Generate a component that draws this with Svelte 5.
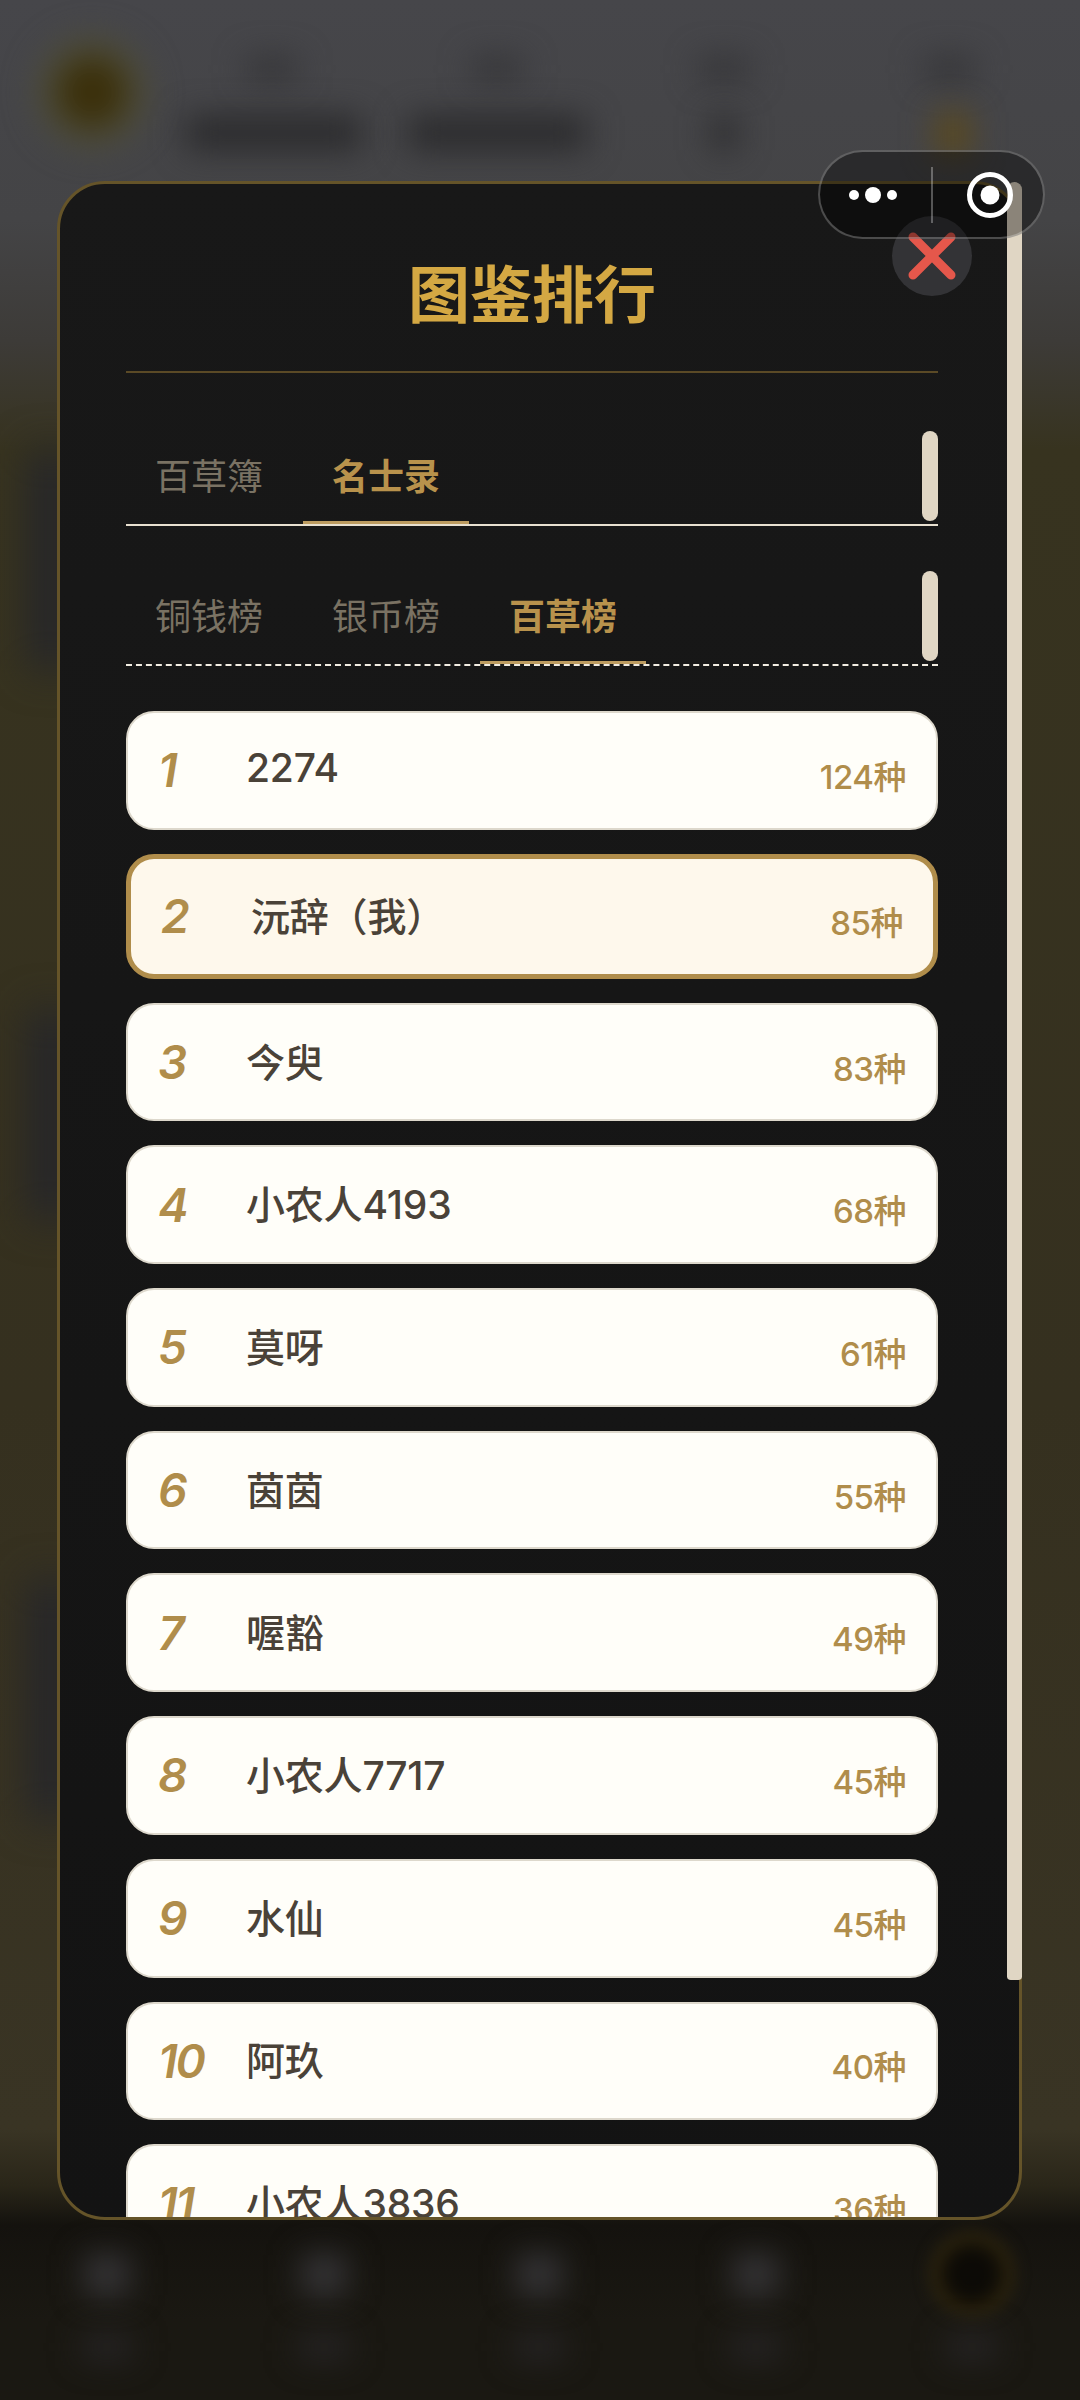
<script lang="ts">
  const mainTabs = [
    { label: "百草簿", active: false },
    { label: "名士录", active: true },
  ];
  const subTabs = [
    { label: "铜钱榜", active: false },
    { label: "银币榜", active: false },
    { label: "百草榜", active: true },
  ];
  const ranks = [
    { rank: 1, name: "2274", count: 124 },
    { rank: 2, name: "沅辞（我）", count: 85, me: true },
    { rank: 3, name: "今臾", count: 83 },
    { rank: 4, name: "小农人4193", count: 68 },
    { rank: 5, name: "莫呀", count: 61 },
    { rank: 6, name: "茵茵", count: 55 },
    { rank: 7, name: "喔豁", count: 49 },
    { rank: 8, name: "小农人7717", count: 45 },
    { rank: 9, name: "水仙", count: 45 },
    { rank: 10, name: "阿玖", count: 40 },
    { rank: 11, name: "小农人3836", count: 36 },
  ];
</script>

<div class="page">
  <!-- blurred page behind the modal -->
  <div class="backdrop">
    <div class="blob avatar"></div>
    <div class="blob label l1"></div>
    <div class="blob label l2"></div>
    <div class="blob label l3"></div>
    <div class="blob label l4"></div>
    <div class="blob value v1"></div>
    <div class="blob value v2"></div>
    <div class="blob value v3"></div>
    <div class="blob gold"></div>
    <div class="blob side s1"></div>
    <div class="blob side s2"></div>
    <div class="blob side s3"></div>
    <div class="blob nav n1"></div>
    <div class="blob nav n2"></div>
    <div class="blob nav n3"></div>
    <div class="blob nav n4"></div>
    <div class="blob nav-gold"></div>
    <div class="blob navlabel m1"></div>
    <div class="blob navlabel m2"></div>
    <div class="blob navlabel m3"></div>
    <div class="blob navlabel m4"></div>
    <div class="blob navlabel m5"></div>
  </div>

  <div class="panel">
    <h1 class="title">图鉴排行</h1>

    <div class="tabs solid">
      {#each mainTabs as tab}
        <div class="tab" class:active={tab.active}>{tab.label}</div>
      {/each}
      <span class="thumb"></span>
    </div>

    <div class="tabs dashed">
      {#each subTabs as tab}
        <div class="tab" class:active={tab.active}>{tab.label}</div>
      {/each}
      <span class="thumb"></span>
    </div>

    <div class="list">
      {#each ranks as item}
        <div class="row" class:me={item.me}>
          <span class="rank">{item.rank}</span>
          <span class="name">{item.name}</span>
          <span class="count">{item.count}种</span>
        </div>
      {/each}
    </div>
  </div>

  <div class="scrollbar"></div>

  <div class="close">
    <svg viewBox="0 0 80 80" width="80" height="80">
      <path d="M21 21 L59 59 M59 21 L21 59" stroke="#e5574b" stroke-width="9" stroke-linecap="round" fill="none" />
    </svg>
  </div>

  <div class="capsule">
    <svg class="dots" viewBox="0 0 60 20" width="60" height="20">
      <circle cx="11" cy="10" r="5" fill="#fff" />
      <circle cx="30" cy="10" r="8" fill="#fff" />
      <circle cx="49" cy="10" r="5" fill="#fff" />
    </svg>
    <span class="sep"></span>
    <svg class="target" viewBox="0 0 48 48" width="48" height="48">
      <circle cx="24" cy="24" r="20.5" stroke="#fff" stroke-width="5" fill="none" />
      <circle cx="24" cy="24" r="9.5" fill="#fff" />
    </svg>
  </div>
</div>

<style>
  :global(body) {
    margin: 0;
    background: #1a1812;
  }

  .page {
    position: relative;
    width: 1080px;
    height: 2400px;
    overflow: hidden;
    padding-top: 181px;
    box-sizing: border-box;
    font-family: Inter, "Noto Sans CJK SC", sans-serif;
  }

  .backdrop {
    position: absolute;
    inset: 0;
    overflow: hidden;
    background: linear-gradient(
      180deg,
      #46464a 0,
      #444446 220px,
      #3d3b38 340px,
      #37331f 450px,
      #35301f 1400px,
      #393424 2130px,
      #2a2619 2185px,
      #14120e 2225px,
      #1a1812 2320px,
      #1a1812 2400px
    );
  }

  .blob {
    position: absolute;
    filter: blur(16px);
  }

  .avatar {
    left: 36px;
    top: 36px;
    width: 112px;
    height: 112px;
    border-radius: 50%;
    background: radial-gradient(circle, #3a2e08 0 30%, #50503f 62%, #4a4a48 100%);
  }

  .label {
    top: 58px;
    width: 50px;
    height: 22px;
    background: #333336;
  }
  .l1 { left: 247px; }
  .l2 { left: 472px; }
  .l3 { left: 699px; }
  .l4 { left: 924px; }

  .value {
    top: 116px;
    height: 34px;
    background: #2a2a2c;
  }
  .v1 { left: 186px; width: 176px; }
  .v2 { left: 408px; width: 178px; }
  .v3 { left: 712px; width: 24px; }

  .gold {
    left: 936px;
    top: 112px;
    width: 34px;
    height: 44px;
    background: #5c4a1c;
  }

  .side {
    left: 30px;
    width: 40px;
    background: #23242b;
    filter: blur(20px);
  }
  .s1 { top: 450px; height: 220px; }
  .s2 { top: 1010px; height: 210px; }
  .s3 { top: 1580px; height: 240px; }

  .nav {
    top: 2255px;
    width: 44px;
    height: 40px;
    background: #38373a;
  }
  .n1 { left: 85px; }
  .n2 { left: 302px; }
  .n3 { left: 517px; }
  .n4 { left: 734px; }

  .nav-gold {
    left: 930px;
    top: 2232px;
    width: 84px;
    height: 84px;
    border-radius: 50%;
    background: radial-gradient(circle, #0c0a06 0 40%, #3b2f10 72%);
    filter: blur(8px);
  }

  .navlabel {
    top: 2336px;
    width: 50px;
    height: 22px;
    background: #29272a;
  }
  .m1 { left: 82px; }
  .m2 { left: 299px; }
  .m3 { left: 514px; }
  .m4 { left: 731px; }
  .m5 { left: 947px; }

  .panel {
    position: relative;
    width: 965px;
    height: 2039px;
    margin-left: 57px;
    padding: 0 81px 0 66px;
    box-sizing: border-box;
    overflow: hidden;
    border: 3px solid #655429;
    border-radius: 48px;
    background: linear-gradient(180deg, #181818, #131313);
  }

  .title {
    margin: 0;
    height: 189px;
    border-bottom: 2px solid #5b4a26;
    box-sizing: border-box;
    padding-top: 71px;
    font-size: 62px;
    line-height: 72px;
    font-weight: 700;
    text-align: center;
    color: #d4a843;
    font-family: "Noto Sans CJK SC", sans-serif;
  }

  .tabs {
    position: relative;
    display: flex;
    gap: 11px;
    box-sizing: border-box;
  }

  .solid {
    height: 90px;
    margin-top: 63px;
    border-bottom: 2px solid #e8e0d0;
  }

  .dashed {
    height: 92px;
    margin-top: 48px;
    border-bottom: 2px dashed #f2ede2;
  }

  .tab {
    position: relative;
    width: 166px;
    text-align: center;
    font-size: 36px;
    line-height: 52px;
    padding-top: 12px;
    box-sizing: border-box;
    color: #7a7263;
    font-family: "Noto Sans CJK SC", sans-serif;
  }

  .dashed .tab {
    padding-top: 14px;
  }

  .tab.active {
    color: #b8924c;
    font-weight: 700;
  }

  .tab.active::after {
    content: "";
    position: absolute;
    left: 0;
    right: 0;
    bottom: 0;
    height: 3px;
    background: #bd9c60;
  }

  .thumb {
    position: absolute;
    right: 0;
    bottom: 3px;
    width: 16px;
    height: 90px;
    border-radius: 8px;
    background: #e0d6c4;
  }

  .list {
    display: flex;
    flex-direction: column;
    gap: 24px;
    margin-top: 45px;
  }

  .row {
    flex: none;
    display: flex;
    align-items: center;
    height: 118.7px;
    box-sizing: border-box;
    padding: 0 30px;
    border: 2px solid #ddd8cc;
    border-radius: 28px;
    background: #fffef9;
  }

  .row.me {
    height: 125px;
    border: 5px solid #b08d4b;
    background: #fef8ec;
  }

  .rank {
    width: 88px;
    flex: none;
    font-size: 46px;
    font-weight: 600;
    font-style: italic;
    letter-spacing: -2px;
    color: #b08d4b;
  }

  .row.me .rank {
    width: 90px;
  }

  .name {
    flex: 1;
    font-size: 39px;
    font-weight: 500;
    letter-spacing: -0.2px;
    color: #4a4238;
    margin-top: -5px;
  }

  .count {
    font-size: 33px;
    font-weight: 500;
    letter-spacing: -0.5px;
    color: #b08d4b;
    margin-top: 9px;
  }

  .scrollbar {
    position: absolute;
    left: 1007px;
    top: 182px;
    width: 15px;
    height: 1798px;
    border-radius: 8px 8px 4px 4px;
    background: #e0d6c4;
  }

  .close {
    position: absolute;
    left: 892px;
    top: 216px;
    width: 80px;
    height: 80px;
    border-radius: 50%;
    background: #333336;
  }

  .close svg {
    display: block;
  }

  .capsule {
    position: absolute;
    left: 818px;
    top: 150px;
    width: 227px;
    height: 89px;
    box-sizing: border-box;
    border: 2px solid rgba(255, 255, 255, 0.25);
    border-radius: 45px;
    background: rgba(0, 0, 0, 0.38);
    display: flex;
    align-items: center;
  }

  .dots {
    margin-left: 23px;
  }

  .sep {
    width: 2px;
    height: 56px;
    margin-left: 28px;
    background: rgba(255, 255, 255, 0.3);
  }

  .target {
    margin-left: 33px;
  }
</style>
